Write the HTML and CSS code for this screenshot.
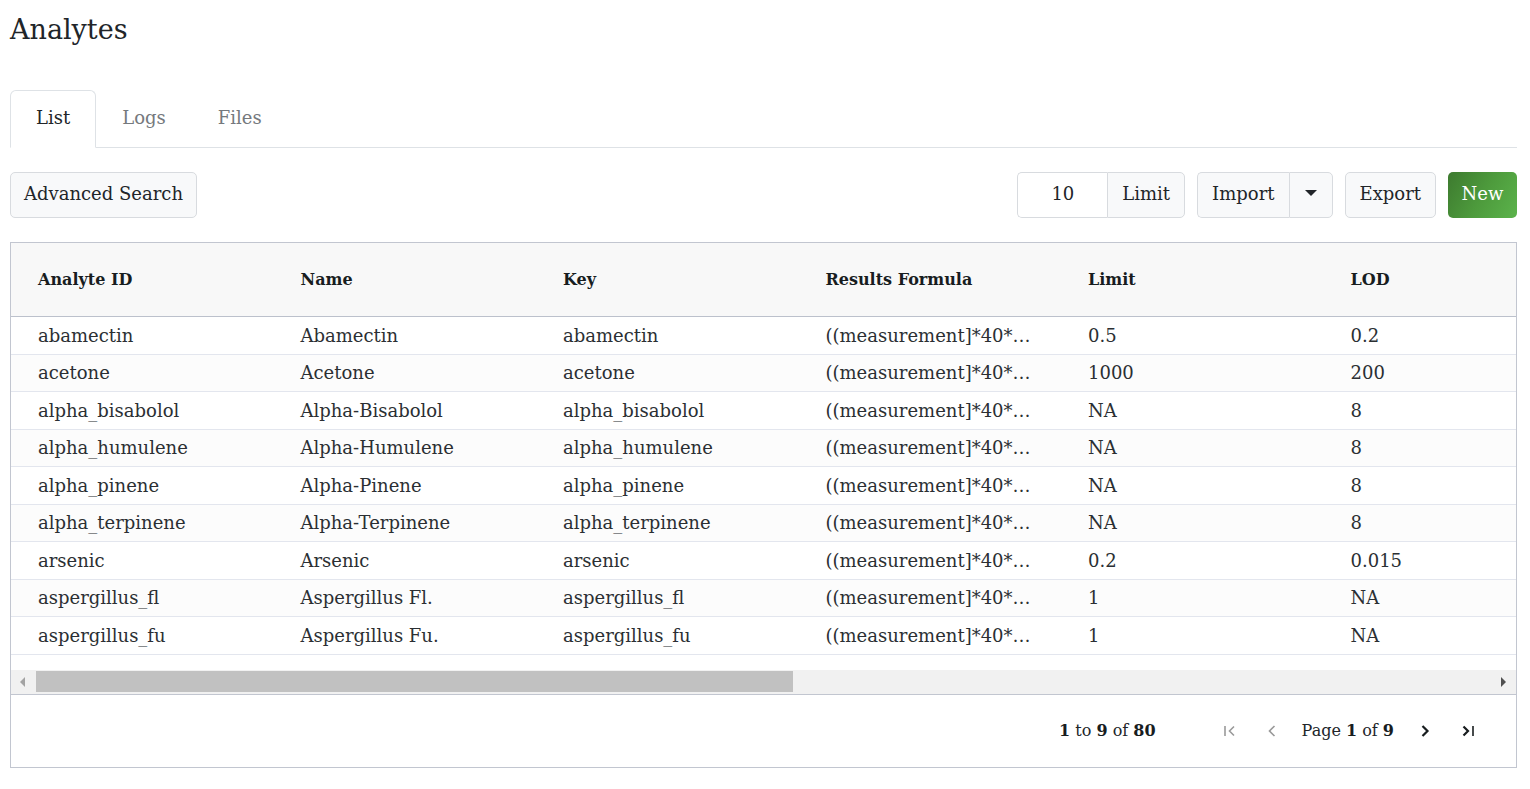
FILE: index.html
```html
<!DOCTYPE html>
<html lang="en">
<head>
<meta charset="utf-8">
<title>Analytes</title>
<link rel="stylesheet" href="styles.css">
</head>
<body>
<div class="page">
  <h1 class="title">Analytes</h1>

  <nav class="tabs">
    <a class="tab active">List</a>
    <a class="tab">Logs</a>
    <a class="tab">Files</a>
  </nav>

  <div class="toolbar">
    <button class="btn btn-search">Advanced Search</button>
    <div class="toolbar-right">
      <div class="group">
        <input class="limit-input" type="text" value="10">
        <button class="btn btn-joined-right">Limit</button>
      </div>
      <div class="group">
        <button class="btn btn-joined-left">Import</button>
        <button class="btn btn-caret btn-joined-right"><span class="caret"></span></button>
      </div>
      <button class="btn">Export</button>
      <button class="btn btn-new">New</button>
    </div>
  </div>

  <div class="grid-panel">
    <div class="grid-viewport">
      <div class="grid">
        <div class="row head">
          <div class="cell">Analyte ID</div><div class="cell">Name</div><div class="cell">Key</div><div class="cell">Results Formula</div><div class="cell">Limit</div><div class="cell">LOD</div><div class="cell"></div>
        </div>
        <div class="row">
          <div class="cell">abamectin</div><div class="cell">Abamectin</div><div class="cell">abamectin</div><div class="cell">((measurement]*40*…</div><div class="cell">0.5</div><div class="cell">0.2</div><div class="cell"></div>
        </div>
        <div class="row odd">
          <div class="cell">acetone</div><div class="cell">Acetone</div><div class="cell">acetone</div><div class="cell">((measurement]*40*…</div><div class="cell">1000</div><div class="cell">200</div><div class="cell"></div>
        </div>
        <div class="row">
          <div class="cell">alpha_bisabolol</div><div class="cell">Alpha-Bisabolol</div><div class="cell">alpha_bisabolol</div><div class="cell">((measurement]*40*…</div><div class="cell">NA</div><div class="cell">8</div><div class="cell"></div>
        </div>
        <div class="row odd">
          <div class="cell">alpha_humulene</div><div class="cell">Alpha-Humulene</div><div class="cell">alpha_humulene</div><div class="cell">((measurement]*40*…</div><div class="cell">NA</div><div class="cell">8</div><div class="cell"></div>
        </div>
        <div class="row">
          <div class="cell">alpha_pinene</div><div class="cell">Alpha-Pinene</div><div class="cell">alpha_pinene</div><div class="cell">((measurement]*40*…</div><div class="cell">NA</div><div class="cell">8</div><div class="cell"></div>
        </div>
        <div class="row odd">
          <div class="cell">alpha_terpinene</div><div class="cell">Alpha-Terpinene</div><div class="cell">alpha_terpinene</div><div class="cell">((measurement]*40*…</div><div class="cell">NA</div><div class="cell">8</div><div class="cell"></div>
        </div>
        <div class="row">
          <div class="cell">arsenic</div><div class="cell">Arsenic</div><div class="cell">arsenic</div><div class="cell">((measurement]*40*…</div><div class="cell">0.2</div><div class="cell">0.015</div><div class="cell"></div>
        </div>
        <div class="row odd">
          <div class="cell">aspergillus_fl</div><div class="cell">Aspergillus Fl.</div><div class="cell">aspergillus_fl</div><div class="cell">((measurement]*40*…</div><div class="cell">1</div><div class="cell">NA</div><div class="cell"></div>
        </div>
        <div class="row">
          <div class="cell">aspergillus_fu</div><div class="cell">Aspergillus Fu.</div><div class="cell">aspergillus_fu</div><div class="cell">((measurement]*40*…</div><div class="cell">1</div><div class="cell">NA</div><div class="cell"></div>
        </div>
      </div>
    </div>

    <div class="hscroll">
      <span class="arrow-left"></span>
      <div class="hscroll-track"><div class="hscroll-thumb"></div></div>
      <span class="arrow-right"></span>
    </div>

    <div class="pager">
      <span class="summary"><b>1</b> to <b>9</b> of <b>80</b></span>
      <span class="pager-btn disabled first">
        <svg width="16" height="16" viewBox="0 0 16 16"><path d="M3 3v10M12 3.5 7.5 8 12 12.5" fill="none" stroke="currentColor" stroke-width="1.6"/></svg>
      </span>
      <span class="pager-btn disabled prev">
        <svg width="16" height="16" viewBox="0 0 16 16"><path d="M10.5 3 5.5 8l5 5" fill="none" stroke="currentColor" stroke-width="1.6"/></svg>
      </span>
      <span class="page-desc">Page <b>1</b> of <b>9</b></span>
      <span class="pager-btn next">
        <svg width="16" height="16" viewBox="0 0 16 16"><path d="M5.5 3l5 5-5 5" fill="none" stroke="currentColor" stroke-width="2.2"/></svg>
      </span>
      <span class="pager-btn last">
        <svg width="16" height="16" viewBox="0 0 16 16"><path d="M3.5 3.5 8 8l-4.5 4.5" fill="none" stroke="currentColor" stroke-width="2.2"/><path d="M13 3v10" fill="none" stroke="currentColor" stroke-width="1.6"/></svg>
      </span>
    </div>
  </div>
</div>
</body>
</html>
```

FILE: styles.css
```css
* { box-sizing: border-box; }

html, body {
  margin: 0;
  padding: 0;
  background: #ffffff;
}

body {
  font-family: "DejaVu Serif", "Liberation Serif", serif;
  font-size: 18px;
  color: #2b2f33;
}

.page {
  padding: 10px 13px 0 10px;
}

.title {
  margin: 0;
  font-size: 27px;
  font-weight: normal;
  line-height: 40px;
  color: #212529;
}

.tabs {
  margin-top: 40px;
  display: flex;
  border-bottom: 1px solid #dee2e6;
  height: 58px;
}

.tab {
  display: flex;
  align-items: center;
  padding: 0 25px 3px;
  height: 58px;
  color: #75797d;
  border: 1px solid transparent;
  border-radius: 6px 6px 0 0;
  margin-bottom: -1px;
}

.tab.active {
  color: #212529;
  background: #fff;
  border-color: #dee2e6 #dee2e6 #fff;
}

.toolbar {
  margin-top: 24px;
  display: flex;
  justify-content: space-between;
  align-items: center;
  height: 46px;
}

.toolbar-right {
  display: flex;
  gap: 12px;
}

.group {
  display: flex;
}

.btn {
  font-family: inherit;
  font-size: 18px;
  color: #212529;
  height: 46px;
  padding: 0 14px 3px;
  background: #f8f9fa;
  border: 1px solid #d8dbdf;
  border-radius: 5px;
  display: flex;
  align-items: center;
  justify-content: center;
}

.btn-search {
  padding-left: 13px;
  padding-right: 13px;
}

.btn-joined-right {
  border-top-left-radius: 0;
  border-bottom-left-radius: 0;
}

.btn-joined-left {
  border-top-right-radius: 0;
  border-bottom-right-radius: 0;
  border-right: none;
}

.limit-input {
  width: 90px;
  height: 46px;
  font-family: inherit;
  font-size: 18px;
  color: #212529;
  text-align: center;
  border: 1px solid #d8dbdf;
  border-right: none;
  border-radius: 5px 0 0 5px;
  background: #fff;
  padding: 0 0 3px;
}

.btn-caret {
  width: 44px;
  padding: 0;
}

.caret {
  width: 0;
  height: 0;
  border-left: 6px solid transparent;
  border-right: 6px solid transparent;
  border-top: 6px solid #212529;
  margin-top: -4px;
}

.btn-new {
  width: 69px;
  padding: 0 0 3px;
  color: #ffffff;
  border: none;
  background: linear-gradient(120deg, #3d7a2f 0%, #4d9a3c 50%, #5bb34b 100%);
}

.grid-panel {
  margin-top: 24px;
  border: 1px solid #c2c6d0;
  width: 1507px;
}

.grid-viewport {
  overflow: hidden;
  width: 100%;
}

.grid {
  width: 100%;
}

.row {
  display: grid;
  grid-template-columns: repeat(5, 262.5px) 192.5px 1fr;
  height: 37.5px;
  align-items: center;
  border-bottom: 1px solid #e3e6ee;
  background: #ffffff;
}

.row.odd {
  background: #fcfcfc;
}

.row.head {
  height: 74px;
  background: #f8f8f8;
  border-bottom: 1px solid #bcc1cc;
  font-size: 16px;
  font-weight: bold;
  color: #181d1f;
}

.cell {
  padding-left: 27px;
  white-space: nowrap;
  overflow: hidden;
  line-height: 30px;
  padding-top: 1px;
}

.hscroll {
  margin-top: 15px;
  height: 25px;
  background: #f1f1f1;
  display: flex;
  align-items: center;
  border-bottom: 1px solid #c2c6d0;
}

.arrow-left,
.arrow-right {
  width: 0;
  height: 0;
  border-top: 5px solid transparent;
  border-bottom: 5px solid transparent;
}

.arrow-left {
  border-right: 5px solid #a3a3a3;
  margin-left: 9px;
  margin-right: 11px;
}

.arrow-right {
  border-left: 5px solid #505050;
  margin-left: 11px;
  margin-right: 10px;
}

.hscroll-track {
  flex: 1;
  height: 21px;
}

.hscroll-thumb {
  width: 757px;
  height: 100%;
  background: #c1c1c1;
}

.pager {
  height: 72px;
  display: flex;
  align-items: center;
  justify-content: flex-end;
  padding-right: 40px;
  font-size: 16px;
  color: #212529;
}

.pager b {
  color: #181d1f;
}

.summary {
  margin-right: 66px;
}

.pager-btn {
  display: flex;
  align-items: center;
  color: #181d1f;
}

.pager-btn.disabled {
  color: #9a9a9a;
}

.pager-btn.first { margin-right: 26px; }
.pager-btn.prev { margin-right: 22px; }
.page-desc { margin-right: 23px; }
.pager-btn.next { margin-right: 27px; }
```
